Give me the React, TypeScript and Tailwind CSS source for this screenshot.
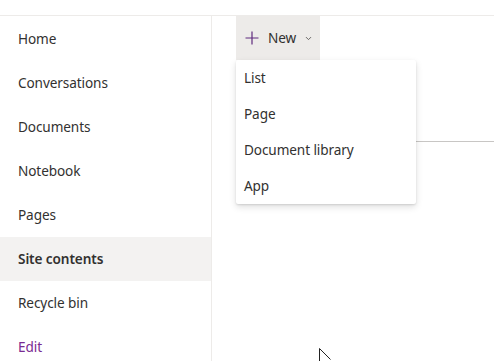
import { ChevronDown } from 'lucide-react';

const navItems = [
  'Home',
  'Conversations',
  'Documents',
  'Notebook',
  'Pages',
  'Site contents',
  'Recycle bin',
];

const menuItems = ['List', 'Page', 'Document library', 'App'];

const App = () => {
  return (
    <div
      className="relative w-[494px] h-[361px] overflow-hidden bg-white text-[13.6px] tracking-[-0.1px] text-[#323130]"
      style={{ fontFamily: '"Segoe UI", "Noto Sans", sans-serif' }}
    >
      {/* top strip */}
      <div className="h-[16px] border-b border-[#edebe9]"></div>

      <div className="flex h-[345px]">
        {/* Left nav */}
        <nav className="w-[212px] shrink-0 border-r border-[#edebe9]">
          <ul className="pt-px">
            {navItems.map((item) => (
              <li
                key={item}
                className={`h-[44px] px-[18px] flex items-center ${
                  item === 'Site contents' ? 'bg-[#f3f2f1] font-semibold' : ''
                }`}
              >
                {item}
              </li>
            ))}
            <li className="h-[44px] px-[18px] flex items-center text-[#7a2b91]">Edit</li>
          </ul>
        </nav>

        {/* Main */}
        <main className="flex-1 pl-[24px]">
          <div className="relative w-[84px]">
            <button className="h-[44px] w-[84px] bg-[#edebe9] flex items-center pl-[9px]">
              <svg width="14" height="14" viewBox="0 0 14 14" className="text-[#5f2a7e]">
                <path d="M7 0.5v13M0.5 7h13" stroke="currentColor" strokeWidth="1.2" fill="none" />
              </svg>
              <span className="ml-[9px]">New</span>
              <ChevronDown className="ml-[8px] w-[9px] h-[9px] text-[#605e5c]" strokeWidth={2.5} />
            </button>

            {/* Dropdown menu */}
            <div className="absolute left-0 top-full z-10 w-[180px] bg-white rounded-[2px] shadow-[0_3px_7px_rgba(0,0,0,0.13),0_1px_2px_rgba(0,0,0,0.11)]">
              {menuItems.map((m) => (
                <div key={m} className="h-[36px] px-[8px] flex items-center">
                  {m}
                </div>
              ))}
            </div>
          </div>

          <div className="mt-[81px] h-px bg-[#c8c6c4]"></div>
        </main>
      </div>

      {/* mouse pointer */}
      <svg
        className="absolute left-[318px] top-[348px]"
        width="14"
        height="14"
        viewBox="0 0 14 14"
      >
        <path d="M1.5 0.5v13.5M1.5 0.5l11 11" stroke="#222" strokeWidth="1" fill="white" />
      </svg>
    </div>
  );
};

export default App;
